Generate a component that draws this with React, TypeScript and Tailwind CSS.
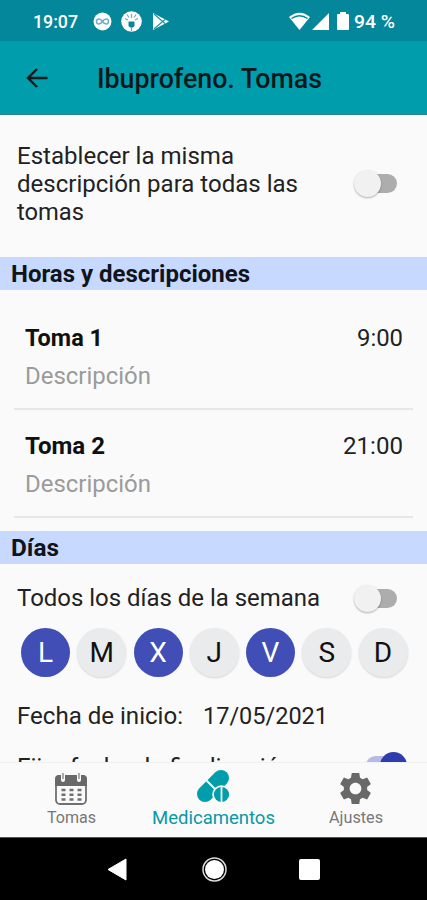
import React from 'react';
import { MdSettings } from 'react-icons/md';

function Line({ text, width, className }: { text: string; width: number; className: string }) {
  return (
    <svg width={width} height="28" className="block shrink-0 overflow-visible">
      <text x="0" y="21" textLength={width} lengthAdjust="spacingAndGlyphs" className={className}>{text}</text>
    </svg>
  );
}

function Toggle() {
  return (
    <span className="flex h-[30px] w-[46px] shrink-0 items-center">
      <span className="flex h-[19px] w-[43px] items-center rounded-full bg-gradient-to-r from-transparent from-30% to-[#adadad] to-30%">
        <span className="h-[27px] w-[27px] shrink-0 rounded-full bg-[#f1f1f1] shadow-[0_1px_2px_rgba(0,0,0,0.3)]" />
      </span>
    </span>
  );
}

function StatusBar() {
  return (
    <div className="flex h-[41px] shrink-0 items-center bg-[#04879a] pl-[33px] pt-px text-white">
      <Line text="19:07" width={45} className="fill-white text-[18.5px] font-medium" />
      <svg className="ml-[15px]" width="19" height="19" viewBox="0 0 19 19">
        <circle cx="9.5" cy="9.5" r="9" fill="#fff" />
        <path d="M9.5 9.5C7.5 6.5 3.5 6 3.5 9.5s4 3 6 0 6-3.5 6 0-4 3-6 0Z" fill="none" stroke="#6eb0bd" strokeWidth="1.5" />
      </svg>
      <svg className="ml-[9px]" width="21" height="21" viewBox="0 0 21 21">
        <circle cx="10.5" cy="10.5" r="10.3" fill="#fff" />
        <path d="M7.5 10.5h6V15L12 16.500H9L7.500 15Z" fill="#04879a" />
        <path d="M10.500 16v4M10.500 3v4M6 3.500l2 3M15 3.500l-2 3M4 7.500l3 1.500M17 7.500L14 9" stroke="#65aebb" strokeWidth="1.200" />
      </svg>
      <svg className="ml-[11px]" width="17" height="17" viewBox="0 0 17 17">
        <path d="M0 0v17l16-8.500Z" fill="#fff" />
        <path d="M1 1l11 9.500M1 16L12 6.500" stroke="#278fa0" strokeWidth="1.200" />
      </svg>
      <svg className="ml-[119px]" width="21" height="18" viewBox="0 0 21 18">
        <path d="M0 5Q10.500-3.500 21 5L10.500 18Z" fill="#fff" />
        <path d="M2.500 6.500Q10.500 1 18.500 6.500" fill="none" stroke="#04879a" strokeWidth="1.500" />
      </svg>
      <svg className="ml-[2px]" width="17" height="17" viewBox="0 0 17 17"><path d="M17 0v17H0Z" fill="#fff" /></svg>
      <svg className="ml-[8px]" width="12" height="19" viewBox="0 0 12 19"><path d="M3 0h6v2h2q1 0 1 1v14q0 1-1 1H1q-1 0-1-1V3q0-1 1-1h2Z" fill="#fff" /></svg>
      <span className="ml-[5px]"><Line text="94 %" width={41} className="fill-white text-[18.5px] font-medium" /></span>
    </div>
  );
}

function SectionTitle({ text, width }: { text: string; width: number }) {
  return (
    <h2 className="h-[33px] bg-[#c8d9ff] pl-[11px] pt-[4px]">
      <Line text={text} width={width} className="fill-[#10141b] text-[24px] font-bold" />
    </h2>
  );
}

function Dose({ name, time, nameWidth, timeWidth }: { name: string; time: string; nameWidth: number; timeWidth: number }) {
  return (
    <div className="mx-[14px] h-[108px] border-b-2 border-[#e7e7e7] pl-[11px] pr-[10px] pt-[23px]">
      <div className="flex justify-between">
        <Line text={name} width={nameWidth} className="fill-[#101010] text-[24px] font-bold" />
        <Line text={time} width={timeWidth} className="fill-[#222] text-[24px]" />
      </div>
      <div className="mt-[10px]"><Line text="Descripción" width={126} className="fill-[#9b9b9b] text-[24px]" /></div>
    </div>
  );
}

const days = [
  { letter: 'L', selected: true },
  { letter: 'M', selected: false },
  { letter: 'X', selected: true },
  { letter: 'J', selected: false },
  { letter: 'V', selected: true },
  { letter: 'S', selected: false },
  { letter: 'D', selected: false },
];

export default function App() {
  return (
    <div className="flex h-[900px] w-[427px] flex-col overflow-hidden bg-[#fafafa] font-['Roboto',sans-serif]">
      <StatusBar />
      <header className="flex h-[74px] shrink-0 items-center border-b border-[#28858d] bg-[#009eac] pl-[26px]">
        <svg width="22" height="20" viewBox="0 0 22 20"><path d="M21.500 10H2M11 1L2 10l9 9" fill="none" stroke="#101819" strokeWidth="2.400" /></svg>
        <span className="ml-[49px] mt-[6px]"><Line text="Ibuprofeno. Tomas" width={225} className="fill-[#08191b] text-[27px] font-medium" /></span>
      </header>
      <main className="h-[647px] shrink-0 overflow-hidden">
        <section className="flex h-[142px] pl-[17px] pt-[28px]">
          <div className="w-[336.5px]">
            <Line text="Establecer la misma" width={217} className="fill-[#222] text-[24px]" />
            <Line text="descripción para todas las" width={281} className="fill-[#222] text-[24px]" />
            <Line text="tomas" width={67} className="fill-[#222] text-[24px]" />
          </div>
          <div className="pt-[25px]"><Toggle /></div>
        </section>
        <SectionTitle text="Horas y descripciones" width={239} />
        <div className="pb-[13px] pt-[12px]">
          <Dose name="Toma 1" time="9:00" nameWidth={78} timeWidth={46} />
          <Dose name="Toma 2" time="21:00" nameWidth={80} timeWidth={60} />
        </div>
        <SectionTitle text="Días" width={48} />
        <div className="flex h-[64px] items-center pl-[17px] pt-[4px]">
          <div className="w-[336.5px] pt-[2px]"><Line text="Todos los días de la semana" width={303} className="fill-[#222] text-[24px]" /></div>
          <Toggle />
        </div>
        <div className="flex gap-[7.250px] pl-[21px]">
          {days.map(({ letter, selected }) => (
            <span key={letter} className={selected ? 'flex h-[49px] w-[49px] items-center justify-center rounded-full bg-[#404eb5] text-[28px] text-white' : 'flex h-[49px] w-[49px] items-center justify-center rounded-full bg-[#eaebec] text-[28px] text-[#111] shadow-[0_1px_2px_rgba(0,0,0,0.15)]'}>{letter}</span>
          ))}
        </div>
        <div className="mt-[26px] flex pl-[17px]">
          <Line text="Fecha de inicio:" width={166} className="fill-[#222] text-[24px]" />
          <span className="ml-[20px]"><Line text="17/05/2021" width={125} className="fill-[#222] text-[24px]" /></span>
        </div>
        <div className="mt-[21px] flex pl-[17px]">
          <div className="w-[349px] pt-[2px]"><Line text="Fijar fecha de finalización" width={276} className="fill-[#222] text-[24px]" /></div>
          <span className="flex h-[27px] w-[41px] items-center">
            <span className="flex h-[19px] w-[41px] items-center justify-end rounded-full bg-[#b5bce4]"><span className="h-[27px] w-[27px] shrink-0 rounded-full bg-[#303bae]" /></span>
          </span>
        </div>
      </main>
      <nav className="grid h-[75px] shrink-0 grid-cols-3 border-t border-[#f0f0f0] bg-[#fafafa]">
        <div className="flex flex-col items-center pt-[9px]">
          <svg width="34" height="34" viewBox="0 0 34 34">
            <rect x="2" y="4" width="30" height="28" rx="4" fill="none" stroke="#707070" strokeWidth="1.800" />
            <path d="M1 14V7q0-4 4-4h24q4 0 4 4v7Z" fill="#696969" />
            <path d="M9 2v6M25 2v6" stroke="#fafafa" strokeWidth="4" strokeLinecap="round" />
            <path d="M9 1.500v5M25 1.500v5" stroke="#888" strokeWidth="1.400" strokeLinecap="round" />
            <path d="M7.500 18h4M15.500 18h4M23.500 18h4M7.500 22.700h4M15.500 22.700h4M23.500 22.700h4M7.500 27.500h4M15.500 27.500h4M23.500 27.500h4" stroke="#707070" strokeWidth="2.500" />
          </svg>
          <span className="-mt-[4px]"><Line text="Tomas" width={49} className="fill-[#777] text-[17px]" /></span>
        </div>
        <div className="flex flex-col items-center pt-[5px]">
          <svg width="34" height="37" viewBox="0 0 34 37">
            <path d="M9 26L25 10" stroke="#009eac" strokeWidth="16" strokeLinecap="round" />
            <path d="M10 12l14 14" stroke="#fafafa" strokeWidth="1.800" />
            <circle cx="25.500" cy="26.500" r="9.300" fill="#fafafa" />
            <circle cx="25.500" cy="26.500" r="7.600" fill="#009eac" />
            <path d="M25.500 18v17" stroke="#fafafa" strokeWidth="1.800" />
          </svg>
          <span className="-mt-[2px]"><Line text="Medicamentos" width={123} className="fill-[#0898a6] text-[19px]" /></span>
        </div>
        <div className="flex flex-col items-center pt-[6px]">
          <MdSettings size={39} color="#696969" />
          <span className="-mt-[6px]"><Line text="Ajustes" width={54} className="fill-[#777] text-[17px]" /></span>
        </div>
      </nav>
      <div className="flex h-[63px] shrink-0 items-center border-t border-[#555] bg-black pl-[107px]">
        <svg width="20" height="23" viewBox="0 0 20 23"><path d="M19 1v21L1 11.500Z" fill="#fff" stroke="#fff" strokeLinejoin="round" strokeWidth="1" /></svg>
        <svg className="ml-[75px]" width="25" height="25" viewBox="0 0 25 25"><circle cx="12.500" cy="12.500" r="11.500" fill="none" stroke="#ddd" strokeWidth="1.500" /><circle cx="12.500" cy="12.500" r="9.500" fill="#fff" /></svg>
        <span className="ml-[72px] h-[21px] w-[21px] rounded-[2px] bg-white" />
      </div>
    </div>
  );
}
